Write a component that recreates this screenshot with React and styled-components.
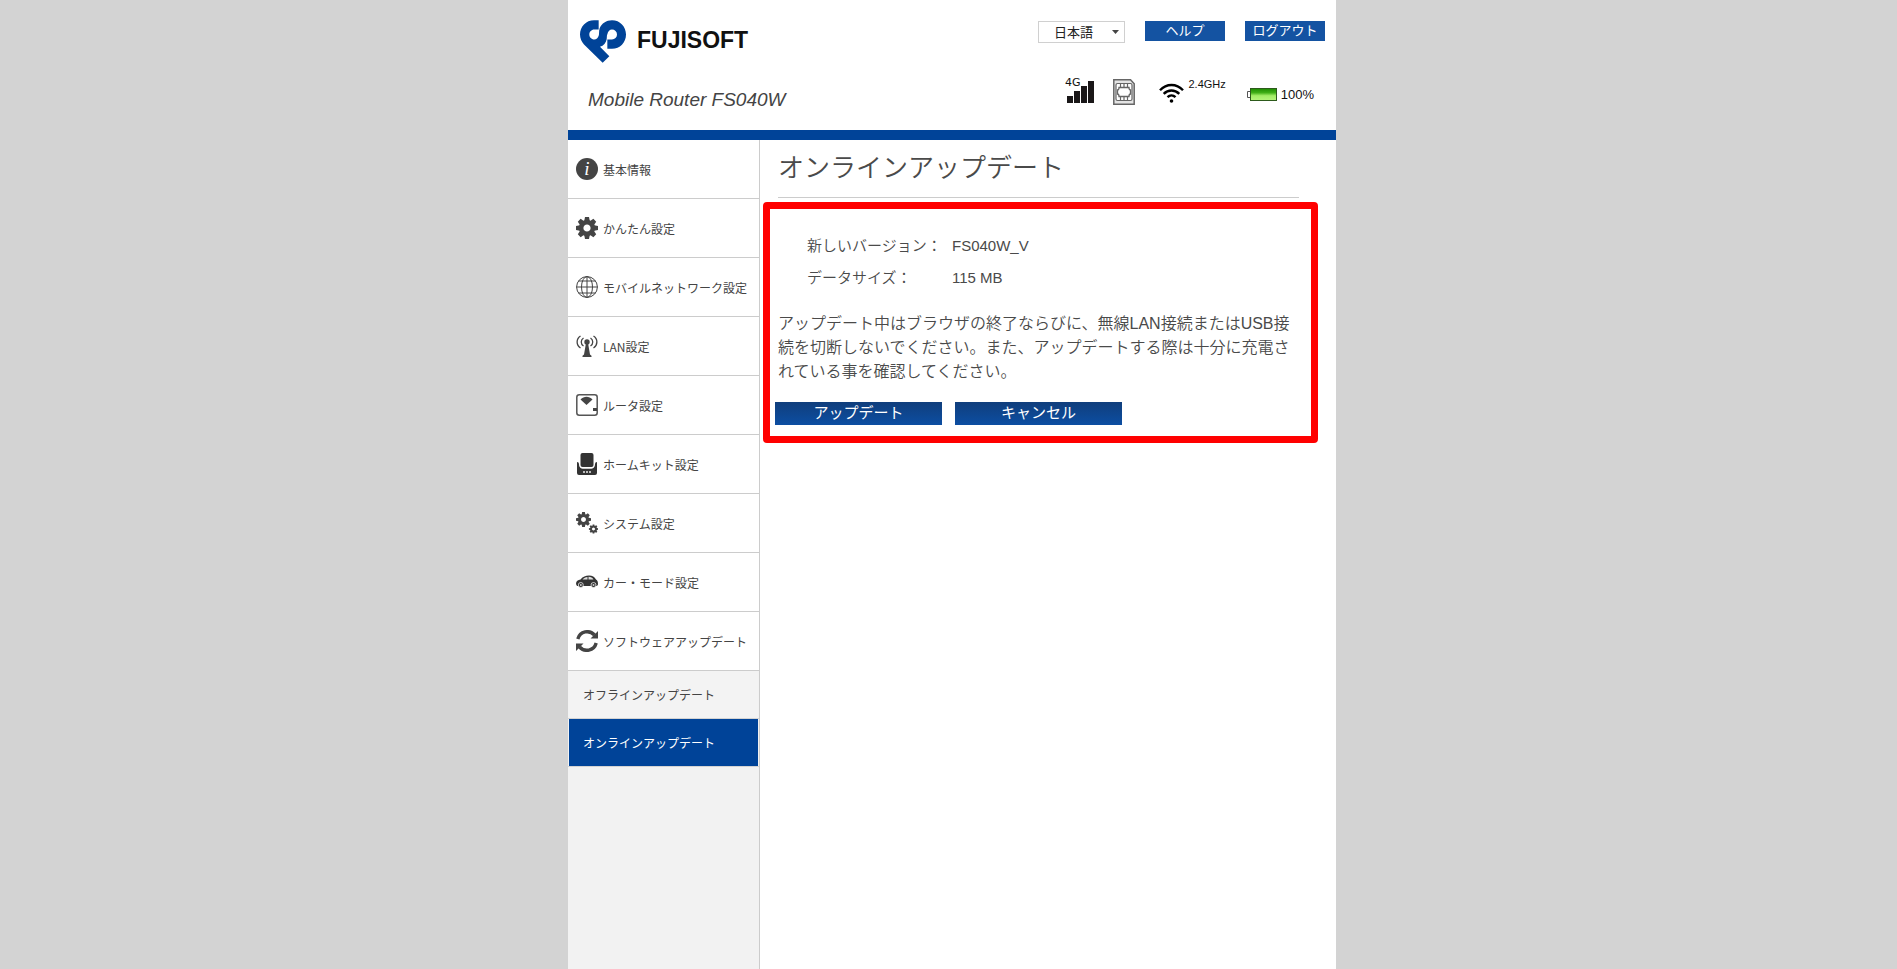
import React from 'react'
import styled, { createGlobalStyle } from 'styled-components'

const GlobalStyle = createGlobalStyle`
  * {
    box-sizing: border-box;
  }
  body {
    margin: 0;
    background: #d3d3d3;
    color: #444;
    font-family: "Liberation Sans", "Noto Sans CJK JP", sans-serif;
  }
  a {
    color: inherit;
    text-decoration: none;
  }
`;

const Screen = styled.div`
  min-height: 100vh;
  display: flex;
  justify-content: center;
  padding-left: 7px;
`;

const Page = styled.div`
  width: 100%;
  max-width: 768px;
  display: flex;
  flex-direction: column;
  background: #fff;
`;

const Header = styled.header`
  display: flex;
  justify-content: space-between;
  border-bottom: 10px solid #004398;
`;

const Brand = styled.div`
  padding: 20px 0 20px 12px;
`;

const Logo = styled.a`
  display: flex;
  align-items: center;
  gap: 11px;
  height: 43px;
  color: #111;
  font-size: 23px;
  font-weight: bold;
  line-height: 40px;

  span {
    align-self: flex-start;
  }
`;

const Model = styled.div`
  margin: 27px 0 0 8px;
  font-size: 19px;
  line-height: 20px;
  font-style: italic;
`;

const Tools = styled.div`
  padding: 21px 11px 0 0;
`;

const Actions = styled.div`
  display: flex;
  justify-content: flex-end;
  gap: 20px;
`;

const Language = styled.div`
  position: relative;

  select {
    display: block;
    width: 87px;
    height: 22px;
    padding: 0 0 0 15px;
    appearance: none;
    border: 1px solid #d0d0d0;
    border-radius: 0;
    background: #fff;
    color: #222;
    font: 13px "Noto Sans CJK JP", sans-serif;
    line-height: 18px;
  }
  svg {
    position: absolute;
    right: 6px;
    top: 9px;
    pointer-events: none;
  }
`;

const SmallButton = styled.button`
  width: 80px;
  height: 20px;
  padding: 0 0 2px;
  border: 0;
  background: #1453a2;
  color: #fff;
  font: 13px "Noto Sans CJK JP", sans-serif;
  line-height: 18px;
`;

const Status = styled.div`
  display: flex;
  align-items: flex-start;
  justify-content: flex-end;
  margin-top: 34px;
  padding-right: 11px;
  color: #111;
`;

const StatusItem = styled.div`
  display: flex;
  align-items: flex-start;
  gap: 4px;
  margin-left: ${props => props.$gap}px;
  padding-top: ${props => props.$top}px;
  font-size: ${props => props.$size || 11}px;
  line-height: 14px;
`;

const WifiBox = styled.div`
  padding-top: 6px;
`;

const Body = styled.div`
  flex: 1;
  display: flex;
`;

const Sidebar = styled.nav`
  flex: 0 0 192px;
  border-right: 1px solid #ccc;
  background: #f2f2f2;
  font-family: "Noto Sans CJK JP", sans-serif;
  font-size: 12px;
`;

const Menu = styled.ul`
  margin: 0;
  padding: 0;
  list-style: none;
`;

const MenuItem = styled.li`
  border-bottom: 1px solid #ccc;
  background: #fff;

  a {
    display: flex;
    align-items: center;
    gap: 5px;
    height: 58px;
    padding-left: 8px;
    white-space: nowrap;
  }
  svg {
    flex: none;
  }
`;

const SubItem = styled.li`
  border-bottom: 1px solid #d3d3d3;

  a {
    display: block;
    margin: 0 1px;
    padding-left: 14px;
    line-height: 47px;
    background: ${props => props.$active ? '#004398' : '#f3f3f3'};
    color: ${props => props.$active ? '#fff' : 'inherit'};
  }
`;

const Main = styled.main`
  flex: 1;
  min-width: 0;
  padding: 0 18px 0 3px;
  color: #4a4a4a;
`;

const Title = styled.h1`
  margin: 0 19px 4px 15px;
  height: 58px;
  border-bottom: 1px solid #ccc;
  font-family: "Noto Sans CJK JP", sans-serif;
  font-size: 26px;
  font-weight: 350;
  line-height: 52px;
`;

const Panel = styled.section`
  padding: 21px 5px 11px;
  border: 7px solid #f00;
  border-radius: 4px;
`;

const Info = styled.dl`
  display: grid;
  grid-template-columns: 145px 1fr;
  margin: 0 0 18px 32px;
  font-size: 15px;
  font-weight: 350;
  line-height: 32px;

  dd {
    margin: 0;
  }
`;

const Notice = styled.p`
  margin: 0 7px 18px 3px;
  font-size: 16px;
  font-weight: 350;
  line-height: 24px;
`;

const Buttons = styled.div`
  display: flex;
  gap: 13px;
`;

const Button = styled.button`
  width: 167px;
  height: 23px;
  padding: 0 0 3px;
  border: 0;
  background: linear-gradient(#103e7c, #0c4ea2);
  color: #fff;
  font: 15px "Noto Sans CJK JP", sans-serif;
  line-height: 20px;
`;

const LogoMark = () => (
  <svg width="46" height="43" viewBox="0 0 138 128" fill="#004398" aria-hidden="true">
    <path d="M56 0H42C18 0 0 19 0 43c0 12 5 22 12 30l56 55 20-20-28-28C71 76 78 68 80 57C81 50 80 46 82 42C84 33 89 28 96 28a15 15 0 0 1 0 30H82V86H96C120 86 138 67 138 43S120 0 96 0C79 0 65 9 59 24C56 34 58 42 56 47C54 54 49 58 43 58C34 58 28 51 28 43S34 28 43 28H56z" />
  </svg>
)

const Gear = ({ x = 11, y = 11, r = 11 }) => (
  <g transform={`translate(${x} ${y}) scale(${r / 11})`} fill="#444">
    {[0, 45, 90, 135, 180, 225, 270, 315].map(a => (
      <path key={a} d="M-3-6L-2-11H2L3-6z" transform={`rotate(${a})`} />
    ))}
    <circle r="5.8" fill="none" stroke="#444" strokeWidth="4.4" />
  </g>
)

const icons = {
  info: (
    <>
      <circle cx="11" cy="11" r="11" fill="#444" />
      <text x="11" y="17" fill="#fff" fontFamily="Liberation Serif" fontSize="19" fontStyle="italic" textAnchor="middle">i</text>
    </>
  ),
  gear: <Gear />,
  globe: (
    <g fill="none" stroke="#444" strokeWidth="1">
      <circle cx="11" cy="11" r="10.4" />
      <ellipse cx="11" cy="11" rx="5.5" ry="10.4" />
      <path d="M11 .5v21M.5 11h21M2.5 5h17M2.5 17h17" />
    </g>
  ),
  antenna: (
    <g fill="none" stroke="#444" strokeWidth="1.3">
      <path d="M4.5 1C0 4 0 10 4.500 13M17.500 1c4.500 3 4.500 9 0 12M7.500 3C4.500 5 4.500 9 7.500 11M14.500 3c3 2 3 6 0 8" />
      <circle cx="11" cy="7" r="2.700" fill="#444" stroke="none" />
      <path d="M10 8h2l2 11.500 1.500 1.200V22h-9v-1.300L8 19.500z" fill="#444" stroke="none" />
    </g>
  ),
  router: (
    <>
      <rect x=".8" y=".8" width="20.400" height="20.400" rx="2.500" fill="none" stroke="#555" strokeWidth="1.500" />
      <path d="M4.500 5.500c3.500-3.600 8.500-3.600 12 0l-6 5.500z" fill="#444" />
      <path d="M17 14h4v3h-4z" fill="#444" />
    </>
  ),
  dock: (
    <g fill="#333">
      <rect x="4.500" y="0" width="13" height="14" rx="2" />
      <path d="M1 9q2 0 2 2c0 3.500 2 4.800 4.500 4.800h7c2.500 0 4.500-1.300 4.500-4.800q0-2 2-2v11q0 2-2 2H3q-2 0-2-2z" />
      <path d="M7 18h2v2H7zM10 18h2v2h-2zM13 18h2v2h-2z" fill="#bbb" />
    </g>
  ),
  gears: (
    <>
      <Gear x={7.5} y={7.5} r={7.5} />
      <Gear x={17.5} y={17} r={4.6} />
    </>
  ),
  car: (
    <g fill="#333">
      <path d="M0 13C0 10 2 9 4.500 8.500 7 5.500 9.500 4.500 13 4.500c3.500 0 5.500 1.500 7 4 1.500.8 2 2 2 5l-1 1.500H1z" />
      <path d="M6.500 8.600c1.500-1.700 3-2.500 5-2.700v2.700zM12.500 5.800c2.500 0 4 1 5 2.800h-5z" fill="#ddd" />
      <circle cx="4.800" cy="14" r="2.500" stroke="#fff" strokeWidth=".7" />
      <circle cx="17.500" cy="14" r="2.500" stroke="#fff" strokeWidth=".7" />
      <circle cx="4.800" cy="14" r="1" fill="#ccc" />
      <circle cx="17.500" cy="14" r="1" fill="#ccc" />
    </g>
  ),
  refresh: (
    <g fill="none" stroke="#444" strokeWidth="3.400">
      <path d="M1.800 9C4 1 13.500-.5 18.500 5M20.200 13C18 21 8.500 22.500 3.500 17" />
      <path d="M22 1v7.500h-7.500zM0 21v-7.500h7.500z" fill="#444" stroke="none" />
    </g>
  ),
}

const menu = [
  { icon: 'info', label: '基本情報' },
  { icon: 'gear', label: 'かんたん設定' },
  { icon: 'globe', label: 'モバイルネットワーク設定' },
  { icon: 'antenna', label: 'LAN設定' },
  { icon: 'router', label: 'ルータ設定' },
  { icon: 'dock', label: 'ホームキット設定' },
  { icon: 'gears', label: 'システム設定' },
  { icon: 'car', label: 'カー・モード設定' },
  { icon: 'refresh', label: 'ソフトウェアアップデート' },
]

const Signal = () => (
  <svg width="29" height="26" viewBox="0 0 29 26" role="img" aria-label="4G">
    <text x="0" y="9" fontFamily="DejaVu Sans" fontSize="11" fill="#111">4G</text>
    <path d="M2 19h6v7H2zM9 14h6v12H9zM16 9h6v17h-6zM23 4h6v22h-6z" fill="#1a1718" />
  </svg>
)

const Sim = () => (
  <svg width="22" height="26" viewBox="0 0 22 26" fill="none" stroke="#666" aria-hidden="true">
    <path d="M.8.8h16.700l3.700 4v20.400H.8z" fill="#e4e4e4" strokeWidth="1.500" />
    <rect x="3" y="4.500" width="16" height="17" rx="1.500" fill="#fff" strokeWidth="1.200" />
    <path d="M6 8.500h10q0 2.500 1.500 2.500v4q-1.500 0-1.500 2.500H6q0-2.500-1.500-2.500v-4q1.500 0 1.500-2.500z" strokeWidth="1.300" />
    <path d="M7.500 4.500v4M11 4.500v4M14.500 4.500v4M7.500 17.500v4M11 17.500v4M14.500 17.500v4" strokeWidth="1.200" />
  </svg>
)

const Wifi = () => (
  <svg width="25" height="20" viewBox="0 0 25 20" fill="none" stroke="#000" strokeWidth="2.400" aria-hidden="true">
    <path d="M1 7.200C7.500.2 17.500.2 24 7.200M4.700 10.800c4.500-4.500 11-4.500 15.600 0M8.500 14.200c2.300-2.200 5.700-2.200 8 0" />
    <circle cx="12.500" cy="18" r="1.800" fill="#000" stroke="none" />
  </svg>
)

const Battery = () => (
  <svg width="30" height="13" viewBox="0 0 30 13" aria-hidden="true">
    <defs>
      <linearGradient id="charge" x2="0" y2="1">
        <stop offset="0" stopColor="#1c8a00" />
        <stop offset=".35" stopColor="#3fae17" />
        <stop offset=".6" stopColor="#a2ec66" />
        <stop offset="1" stopColor="#b4f47c" />
      </linearGradient>
    </defs>
    <path d="M.5 3.500h3v6h-3z" fill="#fff" stroke="#555" />
    <rect x="3.500" y=".5" width="26" height="12" fill="url(#charge)" stroke="#2d5a1c" />
  </svg>
)

export default () => {
  return (
    <Screen>
      <GlobalStyle />
      <Page>
        <Header>
          <Brand>
            <Logo href="#">
              <LogoMark />
              <span>FUJISOFT</span>
            </Logo>
            <Model>Mobile Router FS040W</Model>
          </Brand>
          <Tools>
            <Actions>
              <Language>
                <select aria-label="言語" defaultValue="ja">
                  <option value="ja">日本語</option>
                </select>
                <svg width="7" height="4" viewBox="0 0 7 4"><path d="M0 0h7L3.500 4z" fill="#444" /></svg>
              </Language>
              <SmallButton type="button">ヘルプ</SmallButton>
              <SmallButton type="button">ログアウト</SmallButton>
            </Actions>
            <Status>
              <StatusItem $gap={0} $top={0}><Signal /></StatusItem>
              <StatusItem $gap={19} $top={2}><Sim /></StatusItem>
              <StatusItem $gap={24} $top={0}>
                <WifiBox><Wifi /></WifiBox>
                2.4GHz
              </StatusItem>
              <StatusItem $gap={21} $top={11} $size={13}>
                <Battery />
                100%
              </StatusItem>
            </Status>
          </Tools>
        </Header>
        <Body>
          <Sidebar>
            <Menu>
              {menu.map(item => (
                <MenuItem key={item.label}>
                  <a href="#">
                    <svg width="22" height="22" viewBox="0 0 22 22" aria-hidden="true">{icons[item.icon]}</svg>
                    {item.label}
                  </a>
                </MenuItem>
              ))}
              <SubItem><a href="#">オフラインアップデート</a></SubItem>
              <SubItem $active><a href="#" aria-current="page">オンラインアップデート</a></SubItem>
            </Menu>
          </Sidebar>
          <Main>
            <Title>オンラインアップデート</Title>
            <Panel>
              <Info>
                <dt>新しいバージョン：</dt>
                <dd>FS040W_V</dd>
                <dt>データサイズ：</dt>
                <dd>115 MB</dd>
              </Info>
              <Notice>
                アップデート中はブラウザの終了ならびに、無線LAN接続またはUSB接続を切断しないでください。また、アップデートする際は十分に充電されている事を確認してください。
              </Notice>
              <Buttons>
                <Button type="button">アップデート</Button>
                <Button type="button">キャンセル</Button>
              </Buttons>
            </Panel>
          </Main>
        </Body>
      </Page>
    </Screen>
  )
};
